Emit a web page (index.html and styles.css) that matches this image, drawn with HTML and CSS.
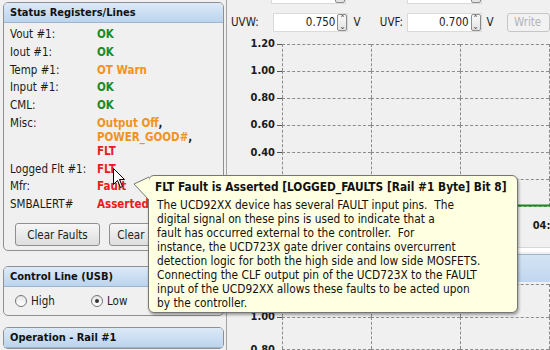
FILE: index.html
```html
<!DOCTYPE html>
<html lang="en">

<head>
    <meta charset="UTF-8">
    <title>Fusion Status</title>
    <link rel="stylesheet" href="styles.css">
</head>

<body>
    <div class="app">
        <div class="left">
            <div class="panel status-panel">
                <div class="panel-head">Status Registers/Lines</div>
                <div class="status-grid">
                    <span>Vout #1:</span><b class="ok">OK</b>
                    <span>Iout #1:</span><b class="ok">OK</b>
                    <span>Temp #1:</span><b class="warn">OT Warn</b>
                    <span>Input #1:</span><b class="ok">OK</b>
                    <span>CML:</span><b class="ok">OK</b>
                    <span>Misc:</span><b><span class="warn">Output Off</span>,<br><span class="warn">POWER_GOOD#</span>,<br><span class="bad">FLT</span></b>
                    <span>Logged Flt #1:</span><b class="bad">FLT</b>
                    <span>Mfr:</span><b class="bad">Fault</b>
                    <span>SMBALERT#</span><b class="bad">Asserted</b>
                </div>
                <div class="button-row">
                    <button class="btn">Clear Faults</button>
                    <button class="btn">Clear Logged</button>
                </div>
            </div>

            <div class="panel control-panel">
                <div class="panel-head">Control Line (USB)</div>
                <div class="radio-row">
                    <label class="radio"><span class="dot"></span>High</label>
                    <label class="radio"><span class="dot checked"></span>Low</label>
                </div>
            </div>

            <div class="panel">
                <div class="panel-head">Operation - Rail #1</div>
            </div>
        </div>

        <div class="right">
            <!-- row above is scrolled mostly out of view -->
            <div class="param-row top-row">
                <span class="param-label"></span>
                <span class="spin"><span class="spin-val"></span><span class="spin-btn"></span></span>
                <span class="unit"></span>
                <span class="param-label second"></span>
                <span class="spin"><span class="spin-val"></span><span class="spin-btn"></span></span>
                <span class="unit"></span>
            </div>
            <div class="param-row">
                <span class="param-label">UVW:</span>
                <span class="spin"><span class="spin-val">0.750</span><span class="spin-btn"><i>&#8963;</i><i>&#8964;</i></span></span>
                <span class="unit">V</span>
                <span class="param-label second">UVF:</span>
                <span class="spin"><span class="spin-val">0.700</span><span class="spin-btn"><i>&#8963;</i><i>&#8964;</i></span></span>
                <span class="unit">V</span>
                <button class="write-btn" disabled>Write</button>
            </div>

            <div class="chart">
                <div class="yaxis">
                    <span>1.20</span><span>1.00</span><span>0.80</span><span>0.60</span><span>0.40</span><span>0.20</span><span>0.00</span>
                </div>
                <div class="plot">
                    <div class="grid">
                        <i></i><i></i><i></i><i></i>
                        <i></i><i></i><i></i><i></i>
                        <i></i><i></i><i></i><i></i>
                        <i></i><i></i><i></i><i></i>
                        <i></i><i></i><i></i><i></i>
                        <i></i><i></i><i></i><i></i>
                    </div>
                    <svg class="trace" width="300" height="163" viewBox="0 0 300 163">
                        <polyline points="0,161.5 300,161.5" fill="none" stroke="#1c8a1c" stroke-width="2"/>
                    </svg>
                </div>
            </div>
            <div class="times">
                <span>04:37</span><span>04:37</span><span>04:38</span><span>04:38</span>
            </div>

            <div class="split"></div>
            <div class="rail-head"></div>

            <div class="chart chart-two">
                <div class="yaxis">
                    <span>1.20</span><span>1.00</span><span>0.80</span>
                </div>
                <div class="plot">
                    <div class="grid">
                        <i></i><i></i><i></i><i></i>
                        <i></i><i></i><i></i><i></i>
                        <i></i><i></i><i></i><i></i>
                    </div>
                </div>
            </div>
        </div>
    </div>

    <!-- tooltip over the page -->
    <svg class="tip-arrow" width="17" height="26" viewBox="0 0 17 26">
        <path d="M16,1 L1,8 L16,24 Z" fill="#ffffe1"/>
        <path d="M16,1 L1,8 L16,24" fill="none" stroke="#767676"/>
    </svg>
    <div class="tooltip">
        <div class="tip-title">FLT Fault is Asserted [LOGGED_FAULTS [Rail #1 Byte] Bit 8]</div>
        <div class="tip-body">
            <div>The UCD92XX device has several FAULT input pins.  The</div>
            <div>digital signal on these pins is used to indicate that a</div>
            <div>fault has occurred external to the controller.  For</div>
            <div>instance, the UCD723X gate driver contains overcurrent</div>
            <div>detection logic for both the high side and low side MOSFETS.</div>
            <div>Connecting the CLF output pin of the UCD723X to the FAULT</div>
            <div>input of the UCD92XX allows these faults to be acted upon</div>
            <div>by the controller.</div>
        </div>
    </div>

    <svg class="cursor" width="13" height="21" viewBox="0 0 13 21">
        <path d="M0.5,0.5 L0.5,16.5 L4.5,12.5 L7.5,19.5 L9.5,18.5 L6.5,11.5 L11.5,11.5 Z" fill="#fff" stroke="#000"/>
    </svg>
</body>

</html>
```

FILE: styles.css
```css
* {
    box-sizing: border-box;
}

body {
    margin: 0;
    width: 550px;
    height: 350px;
    overflow: hidden;
    background-color: #f0f0f0;
    font-family: "DejaVu Sans Condensed", "DejaVu Sans", sans-serif;
    font-size: 11px;
    color: #1a1a1a;
}

.app {
    display: flex;
    height: 350px;
}

.left {
    width: 227px;
    flex: none;
    padding: 2px 0 0 3px;
    border-right: 1px solid #a4a4a4;
}

.panel {
    width: 221px;
    border: 1px solid #8e9092;
    border-radius: 5px;
    margin-bottom: 15px;
}

.panel-head {
    height: 20px;
    line-height: 20px;
    padding-left: 6px;
    font-weight: bold;
    color: #111;
    background: linear-gradient(#dce9f7, #bcd4ee);
    border-bottom: 1px solid #9db5cf;
    border-radius: 4px 4px 0 0;
}

.status-grid {
    display: grid;
    grid-template-columns: 87px 1fr;
    row-gap: 3.75px;
    line-height: 14px;
    padding: 4px 0 0 6px;
    font-size: 11.5px;
}

.ok { color: #1d8a1d; }
.warn { color: #f39220; }
.bad { color: #ea1b1b; }

.button-row {
    display: flex;
    gap: 9px;
    padding: 12px 0 4px 11px;
}

.btn {
    width: 85px;
    height: 23px;
    padding: 0;
    font-family: inherit;
    font-size: 11.5px;
    color: #222;
    border: 1px solid #8f8f8f;
    border-radius: 3px;
    background: linear-gradient(#f6f6f6, #dedede);
}

.control-panel {
    margin-bottom: 11px;
}

.radio-row {
    display: flex;
    height: 28px;
    align-items: center;
    padding-left: 11px;
    font-size: 11.5px;
}

.radio {
    display: flex;
    align-items: center;
    gap: 4px;
    width: 76px;
}

.dot {
    width: 12px;
    height: 12px;
    border: 1px solid #767676;
    border-radius: 50%;
    background: linear-gradient(#e6e6e6, #ffffff);
    display: flex;
    align-items: center;
    justify-content: center;
}

.dot.checked::after {
    content: "";
    width: 4px;
    height: 4px;
    border-radius: 50%;
    background: #333;
}

.right {
    flex: 1;
    min-width: 0;
    padding-left: 4px;
    overflow: hidden;
}

.param-row {
    display: flex;
    align-items: center;
    height: 20px;
    margin-top: 8px;
    font-size: 11.5px;
    white-space: nowrap;
}

.top-row {
    margin-top: -16px;
}

.top-row .param-label {
    width: 40px;
}

.param-label {
    width: 46px;
}

.param-label.second {
    width: 29px;
    margin-left: 19px;
}

.spin {
    display: flex;
    height: 19px;
    background: #fff;
    border: 1px solid #dadada;
}

.spin-val {
    width: 63px;
    text-align: right;
    line-height: 17px;
    padding-right: 2px;
}

.spin-btn {
    width: 10px;
    border: 1px solid #8d8d8d;
    border-radius: 2px;
    background: linear-gradient(#fafafa, #e2e2e2);
    display: flex;
    flex-direction: column;
}

.spin-btn i {
    font-style: normal;
    font-size: 8px;
    line-height: 8px;
    height: 8px;
    text-align: center;
    color: #444;
}

.unit {
    margin-left: 5px;
    width: 8px;
}

.write-btn {
    margin-left: 13px;
    width: 46px;
    height: 19px;
    padding: 0 0 0 6px;
    font-family: inherit;
    font-size: 11.5px;
    color: #b4b4b4;
    background: #f2f2f2;
    border: 1px solid #c6c6c6;
    border-radius: 3px;
    text-align: left;
}

.chart {
    display: flex;
}

.yaxis {
    width: 51px;
    flex: none;
    height: 177px;
    margin-top: 5px;
    display: flex;
    flex-direction: column;
    justify-content: space-between;
    align-items: flex-end;
    font-weight: bold;
    line-height: 14px;
}

.yaxis span::after {
    content: "";
    display: inline-block;
    width: 5px;
    margin-left: 2px;
    vertical-align: middle;
    border-top: 1px solid #555;
}

.plot {
    position: relative;
    margin-top: 12px;
    width: 300px;
    height: 163px;
    border-bottom: 1px dashed #8c8c8c;
}

.grid {
    display: grid;
    grid-template-columns: repeat(4, 89px);
    grid-auto-rows: 1fr;
    height: 100%;
}

.grid i {
    border-top: 1px dashed #8c8c8c;
    border-left: 1px dashed #8c8c8c;
}

.trace {
    position: absolute;
    left: 0;
    top: 0;
}

.times {
    display: flex;
    margin: 5px 0 0 6px;
    font-weight: bold;
    line-height: 14px;
}

.times span {
    width: 89px;
    flex: none;
    text-align: center;
}

.split {
    margin-top: 14px;
    height: 5px;
    background: #fff;
    border-top: 1px solid #d8d8d8;
}

.rail-head {
    margin-top: 2px;
    height: 28px;
    background: linear-gradient(#d3e3f4, #c1d7ef);
    border-top: 1px solid #9db5cf;
}

.chart-two .yaxis {
    height: 80px;
    margin-top: -5px;
}

.chart-two .plot {
    margin-top: 2px;
    height: 99px;
}

.tooltip {
    position: absolute;
    left: 148px;
    top: 175px;
    width: 370px;
    height: 138px;
    padding: 4px 0 0 6px;
    background: #ffffe1;
    border: 1px solid #767676;
    border-radius: 6px;
    box-shadow: 1px 2px 3px rgba(0, 0, 0, 0.35);
    line-height: 14px;
    font-size: 11.8px;
    color: #111;
}

.tip-title {
    font-weight: bold;
    margin-bottom: 4px;
}

.tip-body {
    padding-left: 2px;
}

.tip-body div {
    white-space: pre;
}

.tip-arrow {
    position: absolute;
    left: 133px;
    top: 176px;
    z-index: 2;
}

.cursor {
    position: absolute;
    left: 113px;
    top: 168px;
    z-index: 3;
}
```
